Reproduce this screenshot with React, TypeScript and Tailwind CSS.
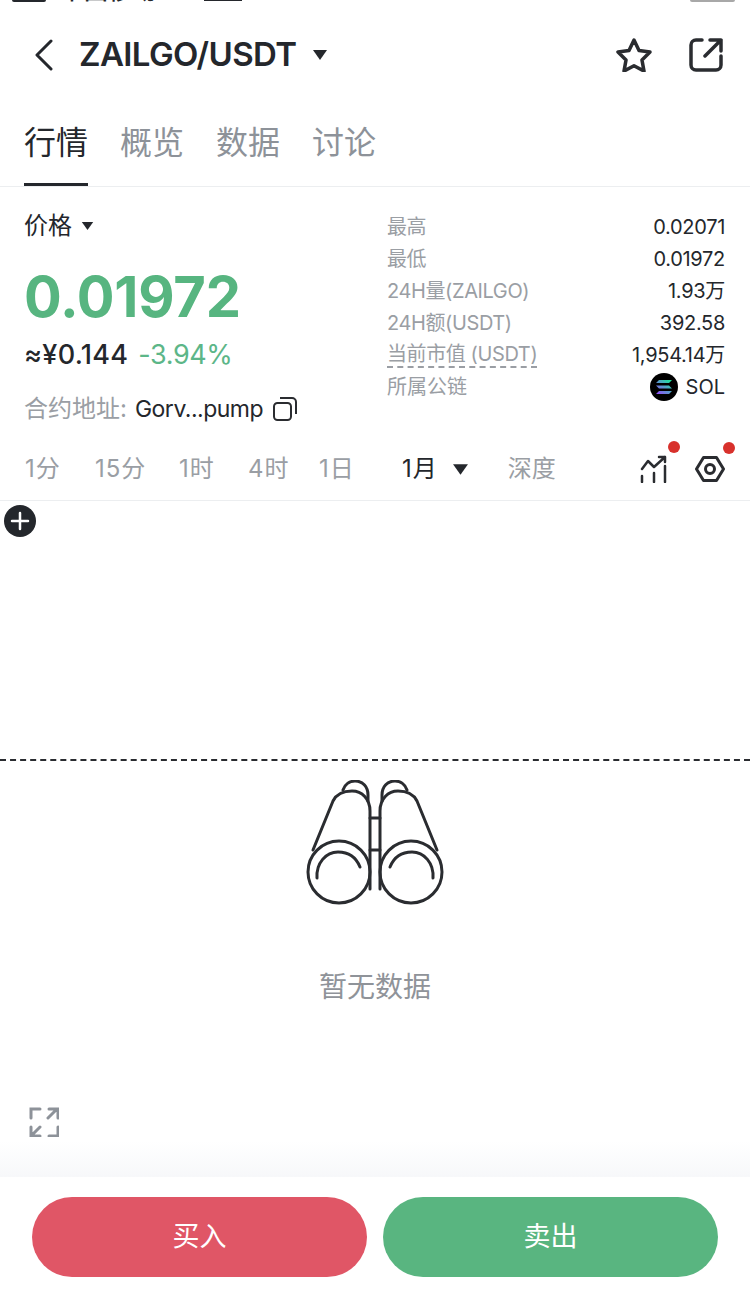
import { useState } from 'react';

const tabs = ['行情', '概览', '数据', '讨论'];
const intervals = [
    { label: '1分', w: 'w-[70px]' },
    { label: '15分', w: 'w-[84px]' },
    { label: '1时', w: 'w-[69px]' },
    { label: '4时', w: 'w-[71px]' },
    { label: '1日', w: 'w-[83px]' },
];
const stats = [
    { label: '最高', value: '0.02071' },
    { label: '最低', value: '0.01972' },
    { label: '24H量(ZAILGO)', value: '1.93万' },
    { label: '24H额(USDT)', value: '392.58' },
    { label: '当前市值 (USDT)', value: '1,954.14万', dashed: true },
];

function Caret({ className }: { className: string }) {
    return (
        <svg viewBox="0 0 16 12" className={className} fill="#24272c">
            <path d="M1 1h14L8 11z" strokeLinejoin="round" />
        </svg>
    );
}

function Binoculars() {
    return (
        <svg viewBox="0 0 140 126" className="w-[140px] h-[126px]" fill="none" stroke="#2a2c30" strokeWidth="3" strokeLinecap="round">
            <path d="M38 10c2-6 7-9 12-9 8 0 13 6 13 14v6" />
            <path d="M102 10c-2-6-7-9-12-9-8 0-13 6-13 14v6" />
            <path d="M8 70 28 21c3-6 10-10 19-10 10 0 18 8 18 20v78" />
            <path d="M132 70 112 21c-3-6-10-10-19-10-10 0-18 8-18 20v78" />
            <circle cx="34" cy="92" r="31" />
            <circle cx="106" cy="92" r="31" />
            <path d="M12 98c-1-15 9-26 21-26 10 0 18 5 22 15" />
            <path d="M128 98c1-15-9-26-21-26-10 0-18 5-22 15" />
            <path d="M65 38h10M65 70h10" />
        </svg>
    );
}

export default function App() {
    const [activeTab] = useState('行情');

    return (
        <div className="w-[750px] h-[1305px] bg-white flex flex-col overflow-hidden text-[#24272c] font-['Inter','Noto_Sans_CJK_SC',sans-serif]">
            {/* cropped status bar */}
            <div className="h-[8px] overflow-hidden flex pl-[12px] pr-[15px]">
                <div className="w-[34px] h-[2px] bg-[#24272c] rounded-b-sm" />
                <span className="ml-[14px] text-[24px] leading-[24px] mt-[-21px] font-medium">中国移动</span>
                <div className="ml-[48px] w-[38px] h-[1px] bg-[#24272c]" />
                <div className="ml-auto w-[45px] h-[2px] bg-[#a8a8a8] rounded-b-sm" />
            </div>

            <div className="h-[94px] flex items-center pl-[34px] pr-[27px] pb-[1px]">
                <svg viewBox="0 0 20 32" className="w-[20px] h-[32px] mr-[25px]" fill="none" stroke="#24272c" strokeWidth="3" strokeLinecap="round" strokeLinejoin="round">
                    <path d="M17 2 3 16l14 14" />
                </svg>
                <span className="text-[33px] leading-none font-semibold tracking-[-0.6px]">ZAILGO/USDT</span>
                <Caret className="w-[16px] h-[12px] ml-[16px]" />
                <div className="ml-auto flex items-center gap-[37px]">
                    <svg viewBox="0 0 36 34" className="w-[36px] h-[34px]" fill="none" stroke="#2a2c30" strokeWidth="3.500" strokeLinejoin="round">
                        <path d="M18 2l5 10.500 11 1.600-8 8 2 11-10-5.400L8 33.100l2-11-8-8 11-1.600z" />
                    </svg>
                    <svg viewBox="0 0 34 34" className="w-[34px] h-[34px]" fill="none" stroke="#2a2c30" strokeWidth="3.500" strokeLinecap="round" strokeLinejoin="round">
                        <path d="M13 2H7a5 5 0 0 0-5 5v20a5 5 0 0 0 5 5h20a5 5 0 0 0 5-5v-9" />
                        <path d="M16 18 32 2M21 2h11v11" />
                    </svg>
                </div>
            </div>

            <div className="h-[85px] flex gap-[32px] pl-[24px] border-b border-[#eceef0]">
                {tabs.map(tab => (
                    <div key={tab} className={`relative w-[64px] pt-[18px] text-[32px] leading-[46px] ${tab === activeTab ? 'text-[#24272c]' : 'text-[#8d9299]'}`}>
                        {tab}
                        {tab === activeTab && <div className="absolute left-0 right-0 bottom-0 h-[3px] bg-[#24272c]" />}
                    </div>
                ))}
            </div>

            <div className="h-[251px] flex justify-between pl-[24px] pr-[25px]">
                <div className="flex flex-col">
                    <div className="flex items-center h-[32px] mt-[23px] text-[24px]">
                        价格
                        <Caret className="w-[13px] h-[10px] ml-[9px]" />
                    </div>
                    <div className="mt-[23px] text-[56px] leading-[64px] font-bold text-[#57b580] tracking-[-0.2px]">0.01972</div>
                    <div className="mt-[8px] flex items-center gap-[10px] h-[36px]">
                        <span className="text-[27px] font-medium tracking-[0.3px]">≈¥0.144</span>
                        <span className="text-[27px] text-[#5cb688] tracking-[-0.4px]">-3.94%</span>
                    </div>
                    <div className="mt-[18px] flex items-center text-[24px] h-[36px]">
                        <span className="text-[#9a9ea4]">合约地址:</span>
                        <span className="ml-[8px] text-[23px] tracking-[-0.5px]">Gorv...pump</span>
                        <svg viewBox="0 0 24 24" className="w-[24px] h-[24px] ml-[10px]" fill="none" stroke="#2a2c30" strokeWidth="2">
                            <rect x="1" y="6" width="17" height="17" rx="3.500" />
                            <path d="M7 1h12a4 4 0 0 1 4 4v12" />
                        </svg>
                    </div>
                </div>

                <div className="w-[338px] pt-[24px] text-[20px]">
                    {stats.map(stat => (
                        <div key={stat.label} className="h-[32px] flex items-center justify-between">
                            <span className={`text-[#9a9ea4] tracking-[-0.4px] ${stat.dashed ? 'border-b-2 border-dashed border-[#9a9ea4] leading-[24px]' : ''}`}>{stat.label}</span>
                            <span className="tracking-[-0.3px]">{stat.value}</span>
                        </div>
                    ))}
                    <div className="h-[32px] flex items-center justify-between">
                        <span className="text-[#9a9ea4]">所属公链</span>
                        <span className="flex items-center gap-[8px]">
                            <svg viewBox="0 0 28 28" className="w-[28px] h-[28px]">
                                <defs>
                                    <linearGradient id="sol" x1="0" y1="1" x2="1" y2="0">
                                        <stop offset="0" stopColor="#9945ff" />
                                        <stop offset="1" stopColor="#14f195" />
                                    </linearGradient>
                                </defs>
                                <circle cx="14" cy="14" r="14" fill="#000" />
                                <path d="M9 7h13l-3 3H6zM6 12.500h13l3 3H9zM9 18h13l-3 3H6z" fill="url(#sol)" />
                            </svg>
                            SOL
                        </span>
                    </div>
                </div>
            </div>

            <div className="h-[63px] flex items-center pl-[25px] pr-[25px] border-b border-[#eceef0] text-[24px] text-[#9a9ea4]">
                {intervals.map(item => (
                    <span key={item.label} className={`${item.w} tracking-[1px]`}>{item.label}</span>
                ))}
                <span className="text-[#24272c] tracking-[1px]">1月</span>
                <Caret className="w-[17px] h-[13px] ml-[14px]" />
                <span className="ml-[39px]">深度</span>
                <div className="relative ml-auto mr-[27px]">
                    <svg viewBox="0 0 28 28" className="w-[28px] h-[28px]" fill="none" stroke="#2a2c30" strokeWidth="2.500" strokeLinecap="round" strokeLinejoin="round">
                        <path d="M2 14 8 6l6 6L25 2M19 2h6v5M2 21v6M14 18v9M25 11v16" />
                    </svg>
                    <div className="absolute top-[-14px] right-[-12px] w-[12px] h-[12px] rounded-full bg-[#d8312c]" />
                </div>
                <div className="relative">
                    <svg viewBox="0 0 30 26" className="w-[30px] h-[26px]" fill="none" stroke="#2a2c30" strokeWidth="3" strokeLinejoin="round">
                        <path d="M8.500 1.500h13L28.500 13l-7 11.500h-13L1.500 13z" />
                        <circle cx="15" cy="13" r="4.500" />
                    </svg>
                    <div className="absolute top-[-14px] right-[-10px] w-[12px] h-[12px] rounded-full bg-[#d8312c]" />
                </div>
            </div>

            <div className="h-[260px] pt-[4px] pl-[4px] border-b-2 border-dashed border-[#2a2c30]">
                <div className="w-[32px] h-[32px] rounded-full bg-[#24272c] flex items-center justify-center">
                    <svg viewBox="0 0 20 20" className="w-[20px] h-[20px]" stroke="#fff" strokeWidth="2.500" strokeLinecap="round">
                        <path d="M10 2v16M2 10h16" />
                    </svg>
                </div>
            </div>

            <div className="flex-1 flex flex-col items-center pt-[19px]">
                <Binoculars />
                <div className="mt-[61px] text-[28px] leading-[40px] text-[#8f9399]">暂无数据</div>
                <div className="self-start ml-[29px] mt-[100px]">
                    <svg viewBox="0 0 30 30" className="w-[30px] h-[30px]" fill="none" stroke="#8d9299" strokeWidth="3" strokeLinecap="round">
                        <path d="M2 11V2h9M29 11V2h-9M2 20v9h9M29 20v9h-9M19 11l9-9M11 20l-9 9" />
                    </svg>
                </div>
                <div className="mt-auto w-full h-[36px] bg-gradient-to-b from-white to-[#f7f8fa]" />
            </div>

            <div className="h-[128px] bg-white flex gap-[16px] px-[32px] pt-[20px]">
                <button className="flex-1 h-[80px] rounded-full bg-[#e05666] text-white text-[27px]">买入</button>
                <button className="flex-1 h-[80px] rounded-full bg-[#59b580] text-white text-[27px]">卖出</button>
            </div>
        </div>
    );
}
